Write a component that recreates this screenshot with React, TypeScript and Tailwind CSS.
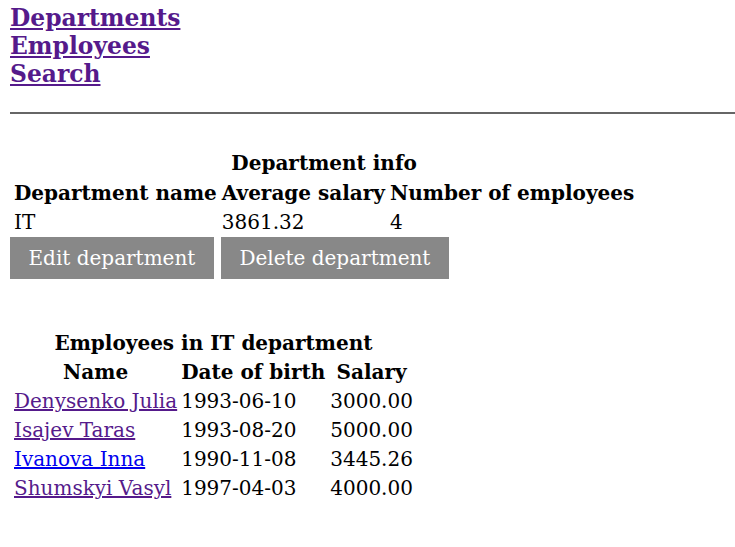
import React from "react";

const font = { fontFamily: '"DejaVu Serif", serif' };

export default function App() {
  const emps = [
    { name: "Denysenko Julia", dob: "1993-06-10", sal: "3000.00", visited: true },
    { name: "Isajev Taras", dob: "1993-08-20", sal: "5000.00", visited: true },
    { name: "Ivanova Inna", dob: "1990-11-08", sal: "3445.26", visited: false },
    { name: "Shumskyi Vasyl", dob: "1997-04-03", sal: "4000.00", visited: true },
  ];
  return (
    <div className="bg-white min-h-[547px] pl-[10px] pt-[4px] text-black font-['DejaVu_Serif',serif]" style={font}>
      <nav className="flex flex-col items-start text-[23.4px] leading-[28px] font-bold">
        <a href="#" className="underline text-[#551a8b]">Departments</a>
        <a href="#" className="underline text-[#551a8b]">Employees</a>
        <a href="#" className="underline text-[#551a8b]">Search</a>
      </nav>
      <div className="mt-[24px] h-[2px] bg-[#666666]" />
      <table className="mt-[38px] ml-[0.5px] border-separate border-spacing-[2px] text-[20px] leading-[23px]">
        <caption className="font-bold pb-[3px]">Department info</caption>
        <thead>
          <tr>
            <th className="px-[1.5px] py-[2px] text-left font-bold">Department name</th>
            <th className="px-[1.5px] py-[2px] text-left font-bold">Average salary</th>
            <th className="px-[1.5px] py-[2px] text-left font-bold">Number of employees</th>
          </tr>
        </thead>
        <tbody>
          <tr>
            <td className="px-[1.5px] py-[2px]">IT</td>
            <td className="px-[1.5px] py-[2px]">3861.32</td>
            <td className="px-[1.5px] py-[2px]">4</td>
          </tr>
        </tbody>
      </table>
      <div className="-mt-[1px] flex gap-[7px] text-[20px] leading-[23px]">
        <button className="bg-[#888888] text-white px-[18.5px] h-[42px]">Edit department</button>
        <button className="bg-[#888888] text-white px-[18.5px] h-[42px]">Delete department</button>
      </div>
      <table className="mt-[53px] ml-[1px] border-separate border-spacing-[2px] text-[20px] leading-[23px]">
        <caption className="font-bold pb-[2px]">Employees in IT department</caption>
        <thead>
          <tr>
            <th className="px-[1px] py-[2px] font-bold text-center">Name</th>
            <th className="pl-[1px] pr-[2px] py-[2px] font-bold text-center">Date of birth</th>
            <th className="px-[1px] py-[2px] font-bold text-center">Salary</th>
          </tr>
        </thead>
        <tbody>
          {emps.map((e) => (
            <tr key={e.name}>
              <td className="px-[1px] py-[2px] text-left">
                <a href="#" className={"underline " + (e.visited ? "text-[#551a8b]" : "text-[#0000ee]")}>{e.name}</a>
              </td>
              <td className="pl-[1px] pr-[2px] py-[2px] text-left">{e.dob}</td>
              <td className="px-[1px] py-[2px] text-left">{e.sal}</td>
            </tr>
          ))}
        </tbody>
      </table>
    </div>
  );
}
